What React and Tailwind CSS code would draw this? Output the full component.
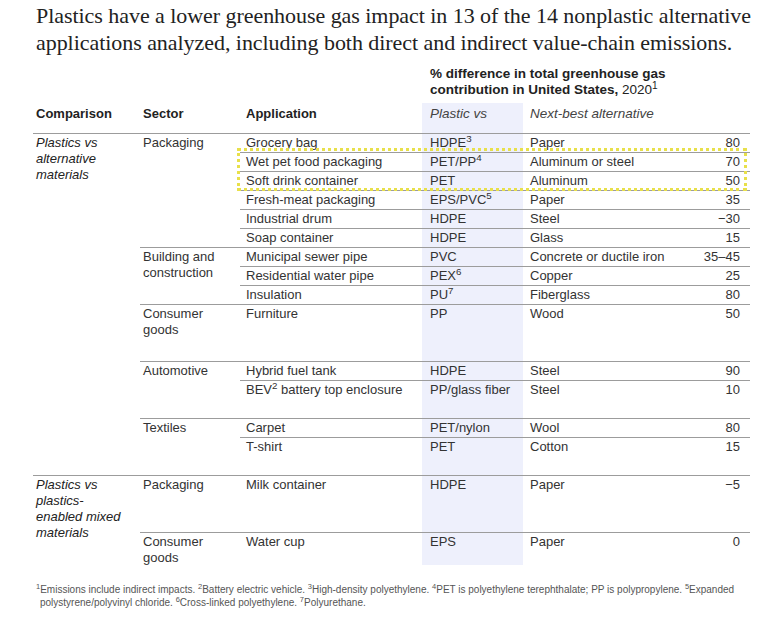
import React from "react";

const groups = [
  {
    label: ["Plastics vs", "alternative", "materials"],
    sectors: [
      {
        name: ["Packaging"],
        rows: [
          { app: "Grocery bag", plastic: "HDPE", sup: "3", alt: "Paper", val: "80" },
          { app: "Wet pet food packaging", plastic: "PET/PP", sup: "4", alt: "Aluminum or steel", val: "70" },
          { app: "Soft drink container", plastic: "PET", alt: "Aluminum", val: "50" },
          { app: "Fresh-meat packaging", plastic: "EPS/PVC", sup: "5", alt: "Paper", val: "35" },
          { app: "Industrial drum", plastic: "HDPE", alt: "Steel", val: "\u221230" },
          { app: "Soap container", plastic: "HDPE", alt: "Glass", val: "15" },
        ],
      },
      {
        name: ["Building and", "construction"],
        rows: [
          { app: "Municipal sewer pipe", plastic: "PVC", alt: "Concrete or ductile iron", val: "35\u201345" },
          { app: "Residential water pipe", plastic: "PEX", sup: "6", alt: "Copper", val: "25" },
          { app: "Insulation", plastic: "PU", sup: "7", alt: "Fiberglass", val: "80" },
        ],
      },
      {
        name: ["Consumer", "goods"],
        rows: [{ app: "Furniture", plastic: "PP", alt: "Wood", val: "50", h: 57 }],
      },
      {
        name: ["Automotive"],
        rows: [
          { app: "Hybrid fuel tank", plastic: "HDPE", alt: "Steel", val: "90" },
          { app: "BEV", appSup: "2", appRest: " battery top enclosure", plastic: "PP/glass fiber", alt: "Steel", val: "10", h: 38 },
        ],
      },
      {
        name: ["Textiles"],
        rows: [
          { app: "Carpet", plastic: "PET/nylon", alt: "Wool", val: "80" },
          { app: "T-shirt", plastic: "PET", alt: "Cotton", val: "15", h: 38 },
        ],
      },
    ],
  },
  {
    label: ["Plastics vs", "plastics-", "enabled mixed", "materials"],
    sectors: [
      {
        name: ["Packaging"],
        rows: [{ app: "Milk container", plastic: "HDPE", alt: "Paper", val: "\u22125", h: 57 }],
      },
      {
        name: ["Consumer", "goods"],
        rows: [{ app: "Water cup", plastic: "EPS", alt: "Paper", val: "0", h: 33 }],
      },
    ],
  },
];

function Row({ row, first }) {
  // the first row sits under its sector's line, so it gives up that pixel
  const h = (row.h || 19) - (first ? 1 : 0);
  return (
    <div className={`flex ${first ? "" : "border-t border-[#9c9c9c]"}`} style={{ height: h }}>
      <div className="w-[182px] pl-[6px] leading-[18px] whitespace-nowrap">
        {row.app}
        {row.appSup && <sup>{row.appSup}</sup>}
        {row.appRest}
      </div>
      <div className="w-[101px] pl-[8px] leading-[18px] bg-[#eef0fc] whitespace-nowrap">
        {row.plastic}
        {row.sup && <sup>{row.sup}</sup>}
      </div>
      <div className="w-[160px] pl-[7px] leading-[18px] whitespace-nowrap">{row.alt}</div>
      <div className="flex-1 pr-[10px] text-right leading-[18px]">{row.val}</div>
    </div>
  );
}

export default function App() {
  return (
    <div className="relative w-[768px] h-[625px] overflow-hidden bg-white text-[13px] text-[#333] font-['Liberation_Sans',Arial,sans-serif]">
      <h1 className="pl-[36px] pt-[2px] whitespace-nowrap font-['Liberation_Serif',serif] text-[22px] leading-[27px] tracking-[-0.05px] text-[#222]">
        Plastics have a lower greenhouse gas impact in 13 of the 14 nonplastic alternative
        <br />
        applications analyzed, including both direct and indirect value-chain emissions.
      </h1>

      <div className="mt-[10px] pl-[430px] text-[13.5px] font-bold leading-4 text-[#222]">
        <div>% difference in total greenhouse gas</div>
        <div>
          contribution in United States, <span className="font-normal">2020</span>
          <sup className="font-normal">1</sup>
        </div>
      </div>

      <div className="ml-[33px] mt-[5px] flex h-[30px] w-[717px] text-[#222]">
        <div className="w-[107px] pl-[3px] pt-[3px] text-[13px] font-bold leading-4">Comparison</div>
        <div className="w-[100px] pl-[3px] pt-[3px] text-[13px] font-bold leading-4">Sector</div>
        <div className="w-[182px] pl-[6px] pt-[3px] text-[13px] font-bold leading-4">Application</div>
        <div className="w-[101px] bg-[#eef0fc] pl-[8px] pt-[3px] text-[13.5px] italic leading-4 text-[#444]">
          Plastic vs
        </div>
        <div className="flex-1 pl-[7px] pt-[3px] text-[13.5px] italic leading-4 text-[#444]">Next-best alternative</div>
      </div>

      <div className="ml-[33px] w-[717px]">
        {groups.map((g, gi) => (
          <div key={gi} className="flex border-t border-[#9c9c9c]">
            <div className="w-[107px] pl-[3px] pt-px italic leading-4 text-[#222]">
              {g.label.map((l) => (
                <div key={l}>{l}</div>
              ))}
            </div>
            <div className="flex flex-1 flex-col">
              {g.sectors.map((s, si) => (
                <div key={si} className={`flex ${si === 0 ? "" : "border-t border-[#9c9c9c]"}`}>
                  <div className="w-[100px] pl-[3px] pt-px leading-4">
                    {s.name.map((n) => (
                      <div key={n}>{n}</div>
                    ))}
                  </div>
                  <div className="flex flex-1 flex-col">
                    {s.rows.map((r, ri) => (
                      <Row key={ri} row={r} first={ri === 0} />
                    ))}
                  </div>
                </div>
              ))}
            </div>
          </div>
        ))}
      </div>

      <div className="mt-[17px] pl-[36px] whitespace-nowrap text-[10px] leading-[13px] text-[#555]">
        <div>
          <sup>1</sup>Emissions include indirect impacts. <sup>2</sup>Battery electric vehicle. <sup>3</sup>High-density
          polyethylene. <sup>4</sup>PET is polyethylene terephthalate; PP is polypropylene. <sup>5</sup>Expanded
        </div>
        <div className="pl-[4px]">
          polystyrene/polyvinyl chloride. <sup>6</sup>Cross-linked polyethylene. <sup>7</sup>Polyurethane.
        </div>
      </div>

      <div className="absolute left-[237px] top-[148px] h-[43px] w-[510px] border-[3px] border-dotted border-[#e8e04a]" />
    </div>
  );
}
